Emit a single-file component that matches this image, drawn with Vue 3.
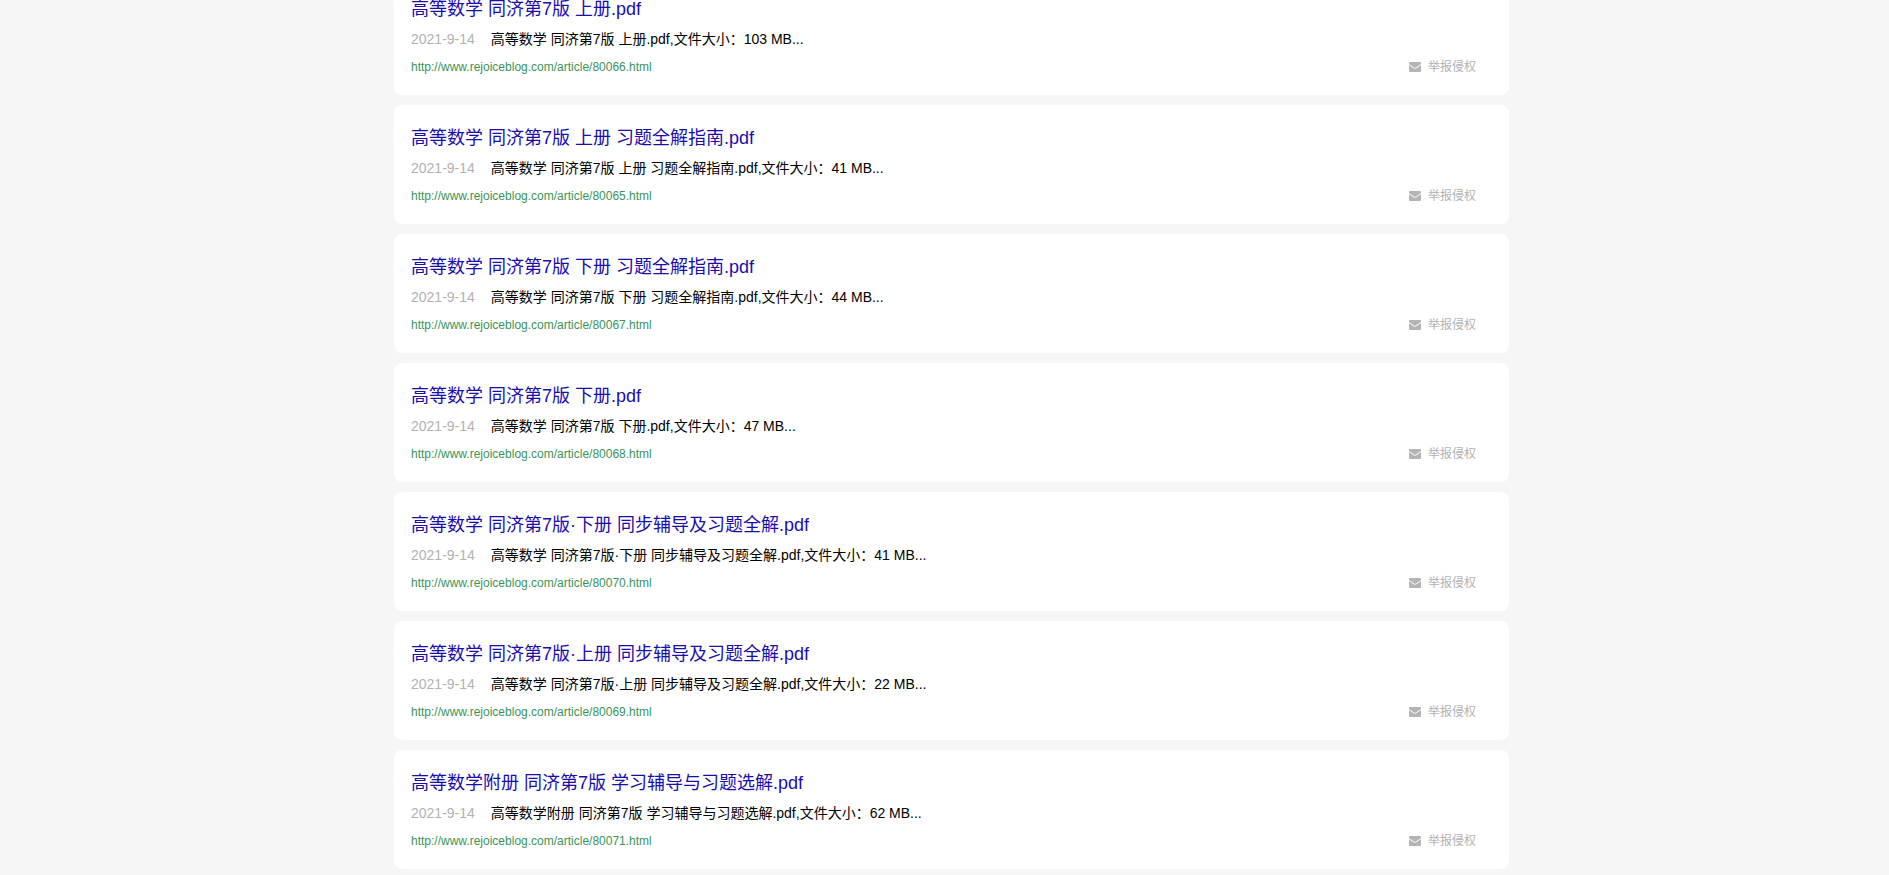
<template>
  <main class="result-page">
    <div class="result-list">
      <article v-for="item in results" :key="item.id" class="result-item">
        <h3 class="result-title">
          <a :href="articleUrl(item.id)">{{ item.title }}.pdf</a>
        </h3>
        <p class="result-desc">
          <time class="result-date">2021-9-14</time>
          <span>{{ item.title }}.pdf,文件大小：{{ item.size }} MB...</span>
        </p>
        <div class="result-footer">
          <a class="result-url" :href="articleUrl(item.id)">{{ articleUrl(item.id) }}</a>
          <button type="button" class="report-btn">
            <svg class="report-icon" viewBox="0 0 12 10" fill="currentColor" xmlns="http://www.w3.org/2000/svg">
              <path d="M1 0h10a1 1 0 0 1 1 1v.9L7 5.4q-1 .6-2 0L0 1.900V1a1 1 0 0 1 1-1z"></path>
              <path d="M0 3.100l4.600 3.200q1.400.9 2.800 0L12 3.100V9a1 1 0 0 1-1 1H1a1 1 0 0 1-1-1z"></path>
            </svg>
            举报侵权
          </button>
        </div>
      </article>
    </div>
  </main>
</template>

<script setup>
import { ref } from 'vue';

const results = ref([
  { id: 80066, title: '高等数学 同济第7版 上册', size: 103 },
  { id: 80065, title: '高等数学 同济第7版 上册 习题全解指南', size: 41 },
  { id: 80067, title: '高等数学 同济第7版 下册 习题全解指南', size: 44 },
  { id: 80068, title: '高等数学 同济第7版 下册', size: 47 },
  { id: 80070, title: '高等数学 同济第7版·下册 同步辅导及习题全解', size: 41 },
  { id: 80069, title: '高等数学 同济第7版·上册 同步辅导及习题全解', size: 22 },
  { id: 80071, title: '高等数学附册 同济第7版 学习辅导与习题选解', size: 62 },
]);

function articleUrl(id) {
  return `http://www.rejoiceblog.com/article/${id}.html`;
}
</script>

<style>
body {
  margin: 0;
  background: #f6f6f6;
}
</style>

<style scoped>
.result-page {
  height: 100vh;
  overflow: hidden;
  padding-left: 14px;
  box-sizing: border-box;
  font-family: "Liberation Sans", Arial, "Noto Sans CJK SC", sans-serif;
}

.result-list {
  display: flex;
  flex-direction: column;
  gap: 10px;
  max-width: 1115px;
  margin: -24px auto 0;
}

.result-item {
  background: #fff;
  border-radius: 8px;
  padding: 21px 33px 20px 17px;
}

.result-title {
  margin: 0 0 8px;
  font-size: 18px;
  line-height: 24px;
  font-weight: normal;
}

.result-title a {
  color: #1a0dab;
  text-decoration: none;
}

.result-desc {
  display: flex;
  gap: 16px;
  margin: 0 0 10px;
  font-size: 14px;
  line-height: 20px;
  color: #000;
}

.result-date {
  color: #b2b2b2;
}

.result-footer {
  display: flex;
  align-items: center;
  justify-content: space-between;
  font-size: 12px;
  line-height: 16px;
}

.result-url {
  color: #3c9358;
  text-decoration: none;
}

.result-url:hover,
.result-title a:hover {
  text-decoration: underline;
}

.report-btn {
  display: flex;
  align-items: center;
  gap: 7px;
  padding: 0;
  border: none;
  background: transparent;
  font: inherit;
  color: #b2b2b2;
  cursor: pointer;
}

.report-icon {
  width: 12px;
  height: 10px;
  color: #b4b4b4;
}
</style>
